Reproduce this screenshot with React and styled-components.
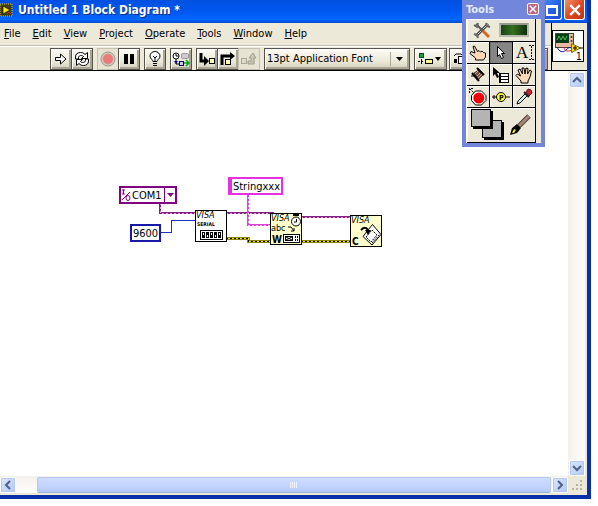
import styled, { createGlobalStyle, css } from "styled-components";

const GlobalStyle = createGlobalStyle`
  * { box-sizing: border-box; }
  body {
    margin: 0;
    background: #fff;
    overflow: hidden;
    font-family: "DejaVu Sans Condensed", "DejaVu Sans", sans-serif;
    font-size: 11px;
    color: #000;
  }
  button, input, select {
    font: inherit;
    color: inherit;
    margin: 0;
    padding: 0;
    border-radius: 0;
  }
  svg { display: block; flex: none; }
`;

const Desktop = styled.div`
  position: relative;
  height: 100vh;
  padding: 0 7px 7px 0;
`;

const Window = styled.div`
  display: flex;
  flex-direction: column;
  height: 100%;
  background: #ece9d8;
  border: solid #0831a8;
  border-width: 0 4px 4px 0;
`;

const TitleBar = styled.header`
  display: flex;
  align-items: center;
  gap: 5px;
  height: 23px;
  padding: 0 2px 3px 0;
  background: linear-gradient(#0050e0, #0058f0 50%, #0066ff 85%, #0a49c8);
`;

const Title = styled.h1`
  flex: 1;
  margin: 0;
  font: bold 12px "DejaVu Sans Condensed", "DejaVu Sans", sans-serif;
  color: #fff;
  text-shadow: 1px 1px 0 #0a2f8c;
  white-space: nowrap;
`;

const CaptionButton = styled.button`
  display: flex;
  align-items: center;
  justify-content: center;
  width: 21px;
  height: 20px;
  margin-left: -3px;
  border: 1px solid #fff;
  border-top: 0;
  border-radius: 0 0 3px 3px;
  background: ${(p) =>
    p.$close
      ? "linear-gradient(135deg, #f09070, #e04820 50%, #c03010)"
      : "linear-gradient(135deg, #4c8cf8, #2460e8 50%, #1c4cd0)"};
`;

const Header = styled.div`
  display: flex;
  height: 48px;
  border-bottom: 1px solid #000;
`;

const Bars = styled.div`
  flex: 1;
  min-width: 0;
  overflow: hidden;
`;

const MenuBar = styled.nav`
  display: flex;
  align-items: center;
  gap: 12px;
  height: 23px;
  padding-left: 4px;
  border-bottom: 1px solid #c5c2b4;
`;

const MenuItem = styled.button`
  border: 0;
  background: none;
  font-size: 11px;
  line-height: 16px;

  &::first-letter { text-decoration: underline; }
`;

const Toolbar = styled.div`
  display: flex;
  gap: 4px;
  height: 24px;
  padding: 1px 3px 1px 50px;
  border-top: 1px solid #fff;
`;

const Group = styled.div`
  display: flex;
  gap: ${(p) => p.$gap || 0}px;
  flex: ${(p) => (p.$fill ? 1 : "none")};
  min-width: 0;

  /* buttons that touch share one border */
  & > * + * { margin-left: ${(p) => (p.$gap ? 0 : -1)}px; }
`;

const raised = css`
  border: 1px solid #55534a;
  background: linear-gradient(#fdfcf6, #ece9d8 60%, #d2cfbc);
  box-shadow: inset 1px 1px 0 #fff, inset -2px -2px 0 #a8a594;
`;

const ToolButton = styled.button`
  display: flex;
  align-items: center;
  justify-content: center;
  flex: ${(p) => (p.$fill ? 1 : "none")};
  width: ${(p) => (p.$wide ? 33 : 22)}px;
  height: 22px;
  ${raised}
  ${(p) =>
    p.disabled &&
    css`
      border-color: #c4c1b1;
      background: #e6e3d2;
      box-shadow: none;
    `}
`;

const FontBox = styled.div`
  position: relative;
  flex: none;
  width: 146px;
  height: 22px;
  ${raised}
`;

const FontSelect = styled.select`
  width: 100%;
  height: 19px;
  padding-left: 2px;
  border: 0;
  appearance: none;
  background: none;
  outline: 0;
`;

const FontArrow = styled.span`
  position: absolute;
  top: 3px;
  right: 2px;
  display: flex;
  align-items: center;
  justify-content: center;
  width: 17px;
  height: 14px;
  border-left: 1px solid #aca899;
  pointer-events: none;
`;

const Connector = styled.div`
  display: flex;
  align-items: center;
  width: 36px;
  border-left: 1px solid #000;
`;

const Workspace = styled.div`
  display: grid;
  flex: 1;
  min-height: 0;
  grid-template: 1fr 17px / 1fr 17px;
  padding: 0 2px 2px 0;
`;

const Canvas = styled.main`
  position: relative;
  overflow: hidden;
  background: #fff;
`;

const ScrollBar = styled.div`
  display: flex;
  flex-direction: ${(p) => (p.$vertical ? "column" : "row")};
  justify-content: space-between;
  gap: 1px;
  padding: ${(p) => (p.$vertical ? "1px 0 0 1px" : "1px 0 0 0")};
  background: ${(p) =>
    p.$vertical
      ? "linear-gradient(90deg, #f3f1ec, #fefefb)"
      : "linear-gradient(#f3f1ec, #fefefb)"};
`;

const ScrollButton = styled.button`
  display: flex;
  align-items: center;
  justify-content: center;
  width: 16px;
  height: 16px;
  border: 1px solid #fff;
  border-radius: 2px;
  outline: 1px solid #b4c8f0;
  outline-offset: -2px;
  background: linear-gradient(135deg, #dce6ff, #b4c8f6);
`;

const Thumb = styled.div`
  display: flex;
  align-items: center;
  justify-content: center;
  flex: 1;
  margin-left: 20px;
  border: 1px solid #b4c8f0;
  border-bottom-color: #98b0dc;
  border-radius: 2px;
  background: linear-gradient(#cfdcff, #c3d3fd 60%, #b4c8f6);
`;

const Grip = styled.div`
  display: flex;
  align-items: center;
  justify-content: center;
  background: #ece9d8;
`;

const Wires = styled.svg`
  position: absolute;
  inset: 0;
  width: 100%;
  height: 100%;
`;

// diagram nodes sit on a free canvas
const Node = styled.div`
  position: absolute;
  left: ${(p) => p.$x}px;
  top: ${(p) => p.$y}px;
`;

const Constant = styled(Node)`
  display: flex;
  align-items: center;
  width: ${(p) => p.$w}px;
  height: 18px;
  border: 2px solid ${(p) => p.$color};
  border-left-width: ${(p) => p.$bar || 2}px;
  background: #fff;
`;

const ConstantInput = styled.input`
  width: 100%;
  height: 14px;
  border: 0;
  outline: 0;
  background: none;
  text-align: center;
`;

const PortSelect = styled.select`
  flex: 1;
  min-width: 0;
  height: 14px;
  padding-left: 1px;
  border: 0;
  outline: 0;
  appearance: none;
  background: none;
`;

const PortArrow = styled.span`
  display: flex;
  align-items: center;
  justify-content: center;
  width: 11px;
  height: 14px;
  border-left: 1px solid #800080;
  pointer-events: none;
`;

const Palette = styled.aside`
  position: absolute;
  top: 0;
  left: 462px;
  width: 83px;
  border: solid #7287dc;
  border-width: 0 4px 4px 4px;
  background: #ece9d8;
`;

const PaletteTitle = styled.div`
  display: flex;
  align-items: center;
  justify-content: space-between;
  height: 19px;
  padding: 0 2px 1px 0;
  background: #7287dc;
  color: #e6ebff;
  font-weight: bold;
`;

const PaletteClose = styled.button`
  display: flex;
  align-items: center;
  justify-content: center;
  width: 12px;
  height: 12px;
  border: 1px solid #fff;
  border-radius: 2px;
  background: #c06480;
`;

const ToolGrid = styled.div`
  display: grid;
  grid-template-columns: repeat(3, 23px);
  grid-template-rows: 23px repeat(3, 22px) 35px;
  width: 70px;
  border-left: 1px solid #fff;
`;

const Tool = styled.button`
  display: flex;
  align-items: center;
  justify-content: center;
  gap: ${(p) => p.$gap || 0}px;
  grid-column: span ${(p) => p.$span || 1};
  border: solid #000;
  border-width: 0 1px 1px 0;
  background: ${(p) => (p.$active ? "#858585" : "#ece9d8")};
  box-shadow: inset 1px 1px 0 ${(p) => (p.$active ? "#6c6c6c" : "#fff")};
`;

const Led = styled.span`
  width: 30px;
  height: 14px;
  border: 2px solid #b8b8b0;
  border-top-color: #989890;
  background: linear-gradient(90deg, #164416, #34701e 45%, #0c300c);
`;

function Svg({ w, h, children, ...rest }) {
  return (
    <svg width={w} height={h} viewBox={`0 0 ${w} ${h}`} fill="none" aria-hidden="true" {...rest}>
      {children}
    </svg>
  );
}

const Down = ({ color = "#000" }) => (
  <Svg w={7} h={4}><path d="M0 0h7L3.5 4z" fill={color} /></Svg>
);

const LabviewIcon = () => (
  <Svg w={13} h={14}>
    <rect y="1" width="12" height="12" fill="#403c10" stroke="#e8c840" strokeDasharray="1 1" />
    <path d="M3 3l7 4-7 4z" fill="#ffe800" stroke="#000" strokeWidth=".6" />
    <path d="M7 11l2-2 3 3" stroke="#c03020" />
  </Svg>
);

const RunIcon = () => (
  <Svg w={12} h={14}>
    <path d="M.5 5.500h5V2l5.500 5-5.500 5V8.500h-5z" fill="#fff" stroke="#000" />
  </Svg>
);

const RunContinuousIcon = () => (
  <Svg w={16} h={16}>
    <path d="M1.500 8V6c0-3 2-4.500 5-4.500 2 0 3 .5 4.500 2l2.500-2v6H7.500L9.500 5.500C8 4 5 4 4.500 6.500V8z" fill="#fff" stroke="#000" />
    <path d="M14.500 8v2c0 3-2 4.500-5 4.500-2 0-3-.5-4.500-2l-2.500 2v-6h6L6.500 10.500c1.500 1.500 4.500 1.500 5-1V8z" fill="#fff" stroke="#000" />
  </Svg>
);

const AbortIcon = () => (
  <Svg w={16} h={16}>
    <circle cx="8" cy="8" r="7" fill="#d8d0c4" stroke="#98948a" />
    <circle cx="8" cy="8" r="5" fill="#f07878" stroke="#d09890" />
  </Svg>
);

const PauseIcon = () => (
  <Svg w={12} h={10}>
    <path d="M1 0h4v10H1zM7 0h4v10H7z" fill="#000" />
  </Svg>
);

const BulbIcon = () => (
  <Svg w={12} h={16}>
    <path d="M4 10.500c0-2-3-2.500-3-5.500a5 4.500 0 0 1 10 0c0 3-3 3.500-3 5.500z" fill="#fff" stroke="#000" />
    <path d="M4 5l2 2 2-2M6 7v3M4 12.500h4M4 14.500h4" stroke="#000" />
  </Svg>
);

const RetainIcon = () => (
  <Svg w={18} h={15}>
    <circle cx="4" cy="4" r="3" fill="#fff" stroke="#000" />
    <path d="M4 2v2h2M4 7v5h4" stroke="#000" />
    <rect x="9.500" y="1.500" width="7" height="5" rx="1" fill="#ccc" stroke="#999" />
    <path d="M2 9h4l-2 3z" fill="#00a" />
    <rect x="7.500" y="9.500" width="4" height="4" fill="#cce" stroke="#006" />
    <path d="M12 11h4M14 8l3 3-3 3" stroke="#00a020" strokeWidth="1.500" />
  </Svg>
);

const StepIntoIcon = () => (
  <Svg w={17} h={14}>
    <path d="M2 1v8h4" stroke="#000" strokeWidth="3" />
    <path d="M5 4l5 5-5 5z" fill="#000" />
    <rect x="10.500" y="6.500" width="5" height="5" fill="#ffffc0" stroke="#000" />
  </Svg>
);

const StepOverIcon = () => (
  <Svg w={16} h={14}>
    <path d="M2 13V4h9" stroke="#000" strokeWidth="3" />
    <path d="M10 0l5 4-5 4z" fill="#000" />
    <rect x="5.500" y="7.500" width="5" height="5" fill="#ffffc0" stroke="#000" />
  </Svg>
);

const StepOutIcon = () => (
  <Svg w={16} h={14}>
    <rect x=".5" y="6.500" width="5" height="5" fill="#dedbc9" stroke="#aaa797" />
    <path d="M7 12h6V6h2l-3-5-4 5h2v3H7z" fill="#c9c6b5" stroke="#a09d8e" />
  </Svg>
);

const AlignIcon = () => (
  <Svg w={26} h={14}>
    <rect x="1.500" y="1.500" width="4" height="4" fill="#20a040" stroke="#044" />
    <path d="M0 9.500h6M3.500 7v6" stroke="#000" strokeDasharray="2 1" />
    <rect x="7.500" y="7.500" width="7" height="4" fill="#ffff90" stroke="#000" />
    <path d="M17 5h6l-3 4z" fill="#000" />
  </Svg>
);

const DistributeIcon = () => (
  <Svg w={26} h={14}>
    <path d="M1 4l2-2h5l2 2" stroke="#000" />
    <rect x="1" y="7" width="3" height="4" fill="#000" />
    <rect x="5.500" y="4.500" width="4" height="7" fill="#fff" stroke="#000" />
    <path d="M17 5h6l-3 4z" fill="#000" />
  </Svg>
);

const ConnectorIcon = () => (
  <Svg w={33} h={33}>
    <rect x=".5" y=".5" width="31" height="31" fill="#fff" stroke="#000" />
    <rect x="3.500" y="3.500" width="18" height="14" fill="#e8b8a0" stroke="#443" />
    <rect x="4" y="4" width="13" height="9" fill="#063c18" />
    <path d="M5 10l2-4 2 4 2-4 2 4 2-4" stroke="#40c050" />
    <circle cx="19.500" cy="7" r="1" fill="#333" />
    <circle cx="19.500" cy="11" r="1" fill="#333" />
    <path d="M5 17c2 5 6 6 9 3 2-2 3-3 6-2" stroke="#20a" />
    <path d="M12 17c0 4 3 5 8 3" stroke="#d02020" />
    <path d="M19.500 13.500l9 4.500-9 4.500z" fill="#ffe000" stroke="#762" />
    <path d="M21 18h4M23 16v4M28 18h3" stroke="#000" />
    <text x="24" y="30" fill="#000" fontSize="10">1</text>
  </Svg>
);

const Hand = ({ open }) => (
  <Svg w={18} h={18}>
    {open ? (
      <path
        d="M6 17v-2L1 9.500l1.500-1.500 3 2L3 4l2-1 2.500 5L7 2h2l1 6 1-6 2 .5L12.500 8 15 4l1.500 1L15 11l-2 4v2z"
        fill="#ffd8b8"
        stroke="#000"
      />
    ) : (
      <path
        d="M6.500 16v-2L1 9.500l1-2L6 9 4 2.500 5.500 2l3 5.500 1.500-1 1.500 1.500 1.500-1 1.500 1.500 2 .5v4L14.500 16z"
        fill="#ffd8b8"
        stroke="#000"
      />
    )}
  </Svg>
);

const WrenchIcon = () => (
  <Svg w={18} h={17}>
    <path d="M15 2L3 14" stroke="#444" strokeWidth="3" />
    <path d="M15 2L3 14" stroke="#ccc" />
    <path d="M3 2l7 7" stroke="#555" strokeWidth="2" />
    <path d="M10 9l6 6" stroke="#d86820" strokeWidth="3" />
    <path d="M1 3l3 2 1-4M13 1l1 3 3 1M1 12l3 1 1 3" stroke="#666" strokeWidth="2" />
  </Svg>
);

const PointerIcon = () => (
  <Svg w={12} h={16}>
    <path d="M2.500 1.500v10l2-2 2 4 2-1-2-4h3z" fill="#fff" stroke="#000" />
  </Svg>
);

const TextIcon = () => (
  <Svg w={19} h={20}>
    <text x="1" y="15" fontFamily="Liberation Serif" fontSize="17" fill="#000">A</text>
    <path d="M16.500 3v13M14 2.500h2M17 2.500h2M14 16.500h2M17 16.500h2" stroke="#000" strokeDasharray="2 1" />
  </Svg>
);

const SpoolIcon = () => (
  <Svg w={16} h={16}>
    <path d="M4 6l5-3 4 5-5 5z" fill="#765044" stroke="#432" />
    <path d="M5 7l4-4M7 9l4-4M8 11l4-4" stroke="#d0a890" />
    <path d="M7 1l7 7M2 6l7 8" stroke="#000" strokeWidth="2" />
    <path d="M1 9h3" stroke="#000" />
  </Svg>
);

const ShortcutIcon = () => (
  <Svg w={18} h={18}>
    <path d="M1 1v9l2-2 2 4 2-1-2-4h3z" fill="#000" />
    <rect x="7.500" y="7.500" width="9" height="9" fill="#fff" stroke="#000" />
    <path d="M8 10.500h8M8 13.500h8M8.500 8v8" stroke="#000" />
  </Svg>
);

const BreakpointIcon = () => (
  <Svg w={18} h={18}>
    <path d="M6.500 3h6L17 7.500v5L12.500 17h-6L2.500 12.500v-5z" fill="#fff" stroke="#000" />
    <circle cx="9.800" cy="10" r="5.500" fill="#f00000" />
    <path d="M.5 5V.5H5M1 1l4 4" stroke="#000" strokeDasharray="2 1" />
  </Svg>
);

const ProbeIcon = () => (
  <Svg w={18} h={12}>
    <path d="M0 6h18M2 4v4" stroke="#000" />
    <circle cx="9" cy="6" r="4.500" fill="#ffff30" stroke="#000" />
    <text x="7" y="9" fontSize="7" fontWeight="bold" fill="#000">P</text>
  </Svg>
);

const DropperIcon = () => (
  <Svg w={18} h={18}>
    <path d="M2 16l1-3 7-7 2 2-7 7z" fill="#d4ecec" stroke="#000" />
    <path d="M9 4l5 5" stroke="#222" strokeWidth="2" />
    <path d="M11 4l2-3 3 1 1 3-3 3z" fill="#d02030" stroke="#601020" />
  </Svg>
);

const ColorBoxes = () => (
  <Svg w={34} h={32}>
    <path d="M13 13h20v18H13z" fill="#000" />
    <rect x="11.500" y="11.500" width="19" height="17" fill="#b4b4b4" stroke="#000" />
    <path d="M2 2h20v18H2z" fill="#000" />
    <rect x=".5" y=".5" width="19" height="17" fill="#b4b4b4" stroke="#000" />
  </Svg>
);

const BrushIcon = () => (
  <Svg w={22} h={22}>
    <path d="M10 12L20 2" stroke="#554038" strokeWidth="5" />
    <path d="M10 12L20 2" stroke="#a08878" strokeWidth="3" />
    <path d="M1 21l2-7 5-4 4 4-4 5z" fill="#000" />
    <path d="M3 19l2-4 2 1-2 3z" fill="#f0e820" />
  </Svg>
);

function Chevron({ dir }) {
  const turn = { up: 0, right: 90, down: 180, left: 270 }[dir];
  return (
    <Svg w={10} h={10}>
      <path d="M1 7l4-4 4 4" stroke="#4d6185" strokeWidth="2" transform={`rotate(${turn} 5 5)`} />
    </Svg>
  );
}

const Cross = ({ size }) => (
  <svg width={size} height={size} viewBox="0 0 10 10" aria-hidden="true">
    <path d="M1 1l8 8M9 1L1 9" stroke="#fff" strokeWidth="2" />
  </svg>
);

const Visa = () => (
  <text x="1" y="8" fontSize="9" fontStyle="italic" fill="#000">VISA</text>
);

const SerialNode = () => (
  <Svg w={32} h={32}>
    <rect x=".5" y=".5" width="31" height="31" fill="#fff" stroke="#000" />
    <Visa />
    <text x="2" y="16" fontSize="5" fontWeight="bold" fill="#000">SERIAL</text>
    <rect x="5.500" y="20.500" width="22" height="9" fill="#fff" stroke="#000" />
    {[7, 11, 15, 19, 23].map((x, i) => (
      <g key={x}>
        <rect x={x} y="22" width="3" height="6" fill="#000" />
        <rect x={x + 1} y={i % 2 ? 25 : 23} width="1" height="2" fill="#fff" />
      </g>
    ))}
  </Svg>
);

const WriteNode = () => (
  <Svg w={32} h={32}>
    <rect x=".5" y=".5" width="31" height="31" fill="#ffffcc" stroke="#000" />
    <Visa />
    <circle cx="26" cy="8.500" r="4.500" fill="#fff" stroke="#000" />
    <path d="M23 1h6v2h-6z" fill="#000" />
    <path d="M26.500 6v3H24" stroke="#000" />
    <text x="1" y="18" fontSize="9" fill="#000">abc</text>
    <path d="M18 14h3l3 4M24 15v3h-3" stroke="#000" />
    <text x="2" y="30" fontSize="10" fontWeight="bold" fill="#000">W</text>
    <rect x="13.500" y="21.500" width="16" height="8" fill="#fff" stroke="#000" />
    <rect x="15.500" y="23.500" width="7" height="4" stroke="#000" />
    <path d="M16 24l6 3M22 24l-6 3M25.500 23v2M25.500 26v2M27.500 23v2M27.500 26v2" stroke="#000" />
  </Svg>
);

const CloseNode = () => (
  <Svg w={32} h={32}>
    <rect x=".5" y=".5" width="31" height="31" fill="#ffffcc" stroke="#000" />
    <Visa />
    <path d="M22.500 9.500l8.500 10-9 10.500-9-8.500z" fill="#fff" stroke="#000" />
    <path d="M16 22l6-7 5 5-6 7zM22 28l8-9" stroke="#000" strokeDasharray="2 1" />
    <path d="M11 15c3-3 6-3 7 1" stroke="#000" strokeWidth="2" />
    <path d="M15 15h6l-3 5z" fill="#000" />
    <text x="2" y="30" fontSize="10" fontWeight="bold" fill="#000">C</text>
  </Svg>
);

function Wire({ d, color, light }) {
  return (
    <>
      <path d={d} stroke={color} strokeWidth="2" />
      <path d={d} stroke={light} strokeDasharray="2 2" />
    </>
  );
}

function ErrorWire({ d }) {
  return (
    <>
      <path d={d} stroke="#8c8600" strokeWidth="3" />
      <path d={d} stroke="#e8e040" />
      <path d={d} stroke="#000" strokeDasharray="2 2" />
    </>
  );
}

function Diagram() {
  return (
    <Canvas>
      <Wires fill="none" shapeRendering="crispEdges">
        <Wire d="M160 132v10h36" color="#852085" light="#d8a0d8" />
        <path d="M161 161.500h10.500v-12H196" stroke="#2030c0" />
        <Wire d="M226 142h48" color="#852085" light="#d8a0d8" />
        <Wire d="M248 122v32h23" color="#e040d8" light="#f8b8f4" />
        <Wire d="M301 146h50" color="#852085" light="#d8a0d8" />
        <ErrorWire d="M226 167.500h22.500v3H271" />
        <ErrorWire d="M301 170.500h50" />
      </Wires>

      <Constant $x={119} $y={115} $w={58} $color="#800080">
        <Svg w={10} h={14}>
          <path d="M1 2h3M2.500 2v4M1 6h3M1 12L9 4" stroke="#800080" />
          <ellipse cx="7" cy="10" rx="2" ry="2.500" stroke="#800080" />
        </Svg>
        <PortSelect aria-label="VISA resource name">
          <option>COM1</option>
        </PortSelect>
        <PortArrow><Down color="#800080" /></PortArrow>
      </Constant>
      <Constant $x={130} $y={153} $w={31} $color="#1818a8">
        <ConstantInput aria-label="Baud rate" defaultValue="9600" />
      </Constant>
      <Constant $x={228} $y={106} $w={55} $bar={4} $color="#e830e0">
        <ConstantInput aria-label="Write buffer" defaultValue="Stringxxx" />
      </Constant>

      <Node $x={195} $y={139}><SerialNode /></Node>
      <Node $x={270} $y={142}><WriteNode /></Node>
      <Node $x={350} $y={144}><CloseNode /></Node>
    </Canvas>
  );
}

function ToolsPalette() {
  return (
    <Palette>
      <PaletteTitle>
        Tools
        <PaletteClose aria-label="Close tools"><Cross size={8} /></PaletteClose>
      </PaletteTitle>
      <ToolGrid>
        <Tool $span={3} $gap={8} aria-label="Automatic tool selection"><WrenchIcon /><Led /></Tool>
        <Tool aria-label="Operate value"><Hand /></Tool>
        <Tool $active aria-label="Position, size or select"><PointerIcon /></Tool>
        <Tool aria-label="Edit text"><TextIcon /></Tool>
        <Tool aria-label="Connect wire"><SpoolIcon /></Tool>
        <Tool aria-label="Object shortcut menu"><ShortcutIcon /></Tool>
        <Tool aria-label="Scroll window"><Hand open /></Tool>
        <Tool aria-label="Set or clear breakpoint"><BreakpointIcon /></Tool>
        <Tool aria-label="Probe data"><ProbeIcon /></Tool>
        <Tool aria-label="Get color"><DropperIcon /></Tool>
        <Tool $span={3} $gap={4} aria-label="Set color"><ColorBoxes /><BrushIcon /></Tool>
      </ToolGrid>
    </Palette>
  );
}

const menus = ["File", "Edit", "View", "Project", "Operate", "Tools", "Window", "Help"];

function App() {
  return (
    <Desktop>
      <GlobalStyle />
      <Window>
        <TitleBar>
          <LabviewIcon />
          <Title>Untitled 1 Block Diagram *</Title>
          <CaptionButton aria-label="Maximize">
            <Svg w={12} h={12}><path d="M1 2h10v9H1zM1 3h10" stroke="#fff" strokeWidth="2" /></Svg>
          </CaptionButton>
          <CaptionButton $close aria-label="Close"><Cross size={12} /></CaptionButton>
        </TitleBar>

        <Header>
          <Bars>
            <MenuBar>
              {menus.map((m) => <MenuItem key={m}>{m}</MenuItem>)}
            </MenuBar>
            <Toolbar>
              <Group>
                <ToolButton aria-label="Run"><RunIcon /></ToolButton>
                <ToolButton aria-label="Run continuously"><RunContinuousIcon /></ToolButton>
              </Group>
              <Group>
                <ToolButton disabled aria-label="Abort"><AbortIcon /></ToolButton>
                <ToolButton aria-label="Pause"><PauseIcon /></ToolButton>
              </Group>
              <ToolButton aria-label="Highlight execution"><BulbIcon /></ToolButton>
              <ToolButton aria-label="Retain wire values"><RetainIcon /></ToolButton>
              <Group>
                <ToolButton aria-label="Step into"><StepIntoIcon /></ToolButton>
                <ToolButton aria-label="Step over"><StepOverIcon /></ToolButton>
                <ToolButton disabled aria-label="Step out"><StepOutIcon /></ToolButton>
              </Group>
              <FontBox>
                <FontSelect aria-label="Text settings">
                  <option>13pt Application Font</option>
                </FontSelect>
                <FontArrow><Down /></FontArrow>
              </FontBox>
              <Group $gap={2} $fill>
                <ToolButton $wide aria-label="Align objects"><AlignIcon /></ToolButton>
                <ToolButton $wide aria-label="Distribute objects"><DistributeIcon /></ToolButton>
                <ToolButton $wide aria-label="Resize objects" />
                <ToolButton $fill aria-label="Reorder" />
              </Group>
            </Toolbar>
          </Bars>
          <Connector><ConnectorIcon /></Connector>
        </Header>

        <Workspace>
          <Diagram />
          <ScrollBar $vertical>
            <ScrollButton aria-label="Scroll up"><Chevron dir="up" /></ScrollButton>
            <ScrollButton aria-label="Scroll down"><Chevron dir="down" /></ScrollButton>
          </ScrollBar>
          <ScrollBar>
            <ScrollButton aria-label="Scroll left"><Chevron dir="left" /></ScrollButton>
            <Thumb>
              <Svg w={8} h={6}><path d="M.5 0v6M2.500 0v6M4.500 0v6M6.500 0v6" stroke="#eef4ff" /></Svg>
            </Thumb>
            <ScrollButton aria-label="Scroll right"><Chevron dir="right" /></ScrollButton>
          </ScrollBar>
          <Grip>
            <Svg w={12} h={12}>
              <path d="M9 1h2v2H9zM9 5h2v2H9zM5 5h2v2H5zM9 9h2v2H9zM5 9h2v2H5zM1 9h2v2H1z" fill="#b8b4a2" />
            </Svg>
          </Grip>
        </Workspace>
      </Window>
      <ToolsPalette />
    </Desktop>
  );
}

export default App;
